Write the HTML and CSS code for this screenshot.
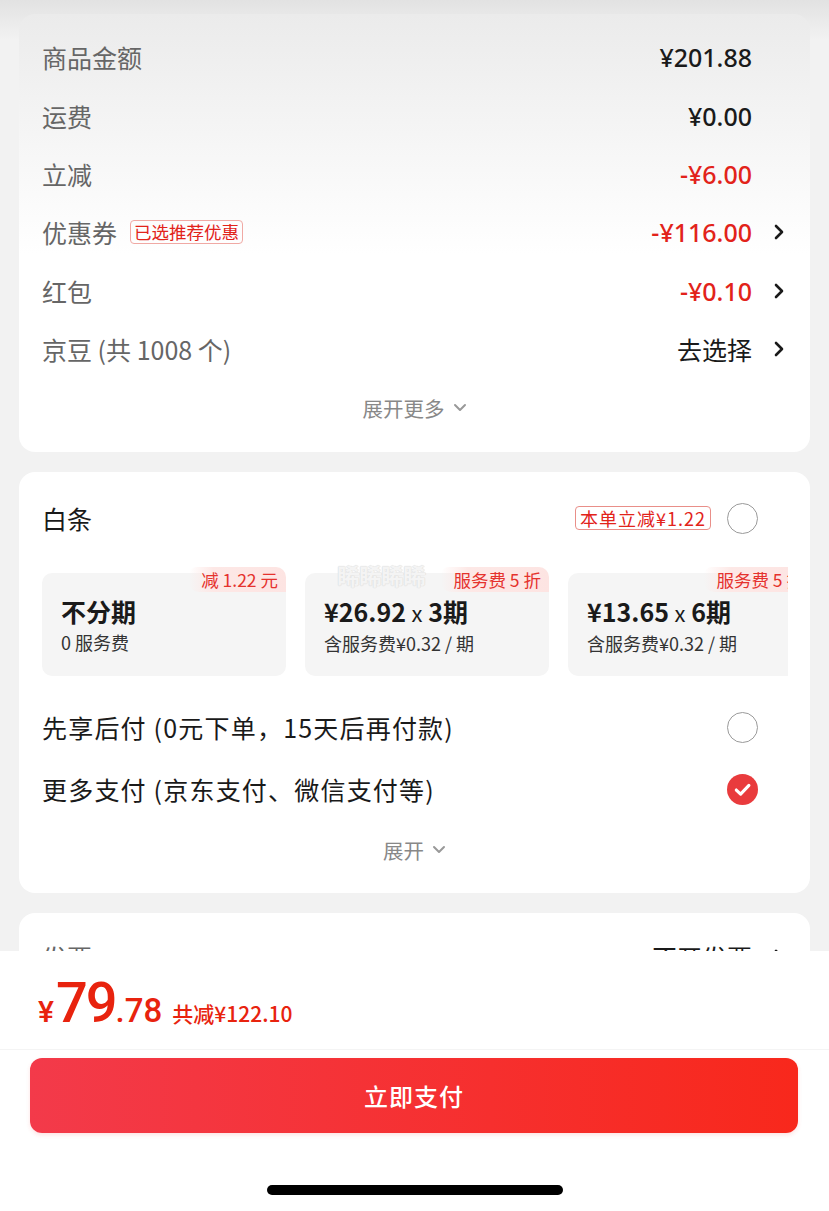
FILE: index.html
```html
<!DOCTYPE html>
<html lang="zh-CN">
<head>
<meta charset="utf-8">
<title>订单结算</title>
<link rel="stylesheet" href="styles.css">
</head>
<body>
<div class="screen">
  <div class="content">
    <section class="card card-summary">
      <div class="row">
        <span class="label">商品金额</span>
        <span class="value">¥201.88</span>
        <span class="arrow-slot"></span>
      </div>
      <div class="row">
        <span class="label">运费</span>
        <span class="value">¥0.00</span>
        <span class="arrow-slot"></span>
      </div>
      <div class="row">
        <span class="label">立减</span>
        <span class="value red">-¥6.00</span>
        <span class="arrow-slot"></span>
      </div>
      <div class="row">
        <span class="label">优惠券<span class="tag-outline">已选推荐优惠</span></span>
        <span class="value red">-¥116.00</span>
        <span class="arrow-slot"><svg class="chev" viewBox="0 0 10 16"><path d="M2 2l6 6-6 6"/></svg></span>
      </div>
      <div class="row">
        <span class="label">红包</span>
        <span class="value red">-¥0.10</span>
        <span class="arrow-slot"><svg class="chev" viewBox="0 0 10 16"><path d="M2 2l6 6-6 6"/></svg></span>
      </div>
      <div class="row">
        <span class="label">京豆 (共 1008 个)</span>
        <span class="value cjk">去选择</span>
        <span class="arrow-slot"><svg class="chev" viewBox="0 0 10 16"><path d="M2 2l6 6-6 6"/></svg></span>
      </div>
      <div class="expand">展开更多<svg class="down" viewBox="0 0 14 9"><path d="M2 2l5 5 5-5"/></svg></div>
    </section>

    <section class="card card-pay">
      <span class="watermark">睎睎睎睎</span>
      <div class="pay-row head">
        <span class="pay-title">白条</span>
        <span class="badge">本单立减¥1.22</span>
        <span class="radio"></span>
      </div>
      <div class="plans">
        <div class="plan">
          <span class="plan-tag">减 1.22 元</span>
          <div class="plan-main">不分期</div>
          <div class="plan-sub">0 服务费</div>
        </div>
        <div class="plan">
          <span class="plan-tag">服务费 5 折</span>
          <div class="plan-main">¥26.92 <span class="x">x</span> 3期</div>
          <div class="plan-sub">含服务费¥0.32 / 期</div>
        </div>
        <div class="plan">
          <span class="plan-tag">服务费 5 折</span>
          <div class="plan-main">¥13.65 <span class="x">x</span> 6期</div>
          <div class="plan-sub">含服务费¥0.32 / 期</div>
        </div>
      </div>
      <div class="pay-row opt">
        <span class="pay-title wide">先享后付 (0元下单，15天后再付款)</span>
        <span class="radio"></span>
      </div>
      <div class="pay-row opt">
        <span class="pay-title wide">更多支付 (京东支付、微信支付等)</span>
        <span class="radio checked"><svg viewBox="0 0 30 30"><path d="M9 15.5l4.2 4 8-8.5"/></svg></span>
      </div>
      <div class="expand small">展开<svg class="down" viewBox="0 0 14 9"><path d="M2 2l5 5 5-5"/></svg></div>
    </section>

    <section class="card card-invoice">
      <div class="row">
        <span class="label">发票</span>
        <span class="value cjk">不开发票</span>
        <span class="arrow-slot"><svg class="chev" viewBox="0 0 10 16"><path d="M2 2l6 6-6 6"/></svg></span>
      </div>
    </section>
  </div>

  <footer class="bar">
    <div class="total">
      <span class="yen">¥</span><span class="int">79</span><span class="dec">.78</span>
      <span class="saved">共减¥122.10</span>
    </div>
    <div class="btn-wrap">
      <button class="pay-btn">立即支付</button>
    </div>
    <div class="home-indicator"></div>
  </footer>
</div>
</body>
</html>
```

FILE: styles.css
```css
* { box-sizing: border-box; }
html, body { margin: 0; padding: 0; }
body {
  background: #f2f2f2;
  font-family: "Noto Sans CJK SC", "Noto Sans", sans-serif;
  color: #1a1a1a;
}
.screen {
  width: 829px;
  height: 1211px;
  display: flex;
  flex-direction: column;
  overflow: hidden;
  background: linear-gradient(180deg, #e2e2e2 0px, #f2f2f2 40px);
}
.content {
  height: 951px;
  flex: none;
  overflow: hidden;
  padding: 14px 19px 0;
  display: flex;
  flex-direction: column;
  gap: 20px;
}
.card {
  background: #fff;
  border-radius: 16px;
  flex: none;
}
.card-summary {
  padding: 14px 0 15px;
  background: linear-gradient(180deg, #ebebeb 0%, #f6f6f6 30%, #fff 55%);
}
.row {
  height: 58.4px;
  display: flex;
  align-items: center;
  padding: 0 26px 0 23px;
}
.label {
  flex: 1;
  font-size: 25px;
  color: #666;
  display: flex;
  align-items: center;
  white-space: nowrap;
}
.tag-outline {
  margin-left: 13px;
  font-size: 17.5px;
  line-height: 22px;
  padding: 0 3px;
  color: #e2231a;
  border: 1px solid #f0a9a4;
  border-radius: 4px;
}
.value {
  font-size: 25px;
  font-weight: 500;
  color: #1a1a1a;
  font-family: "Noto Sans", "Noto Sans CJK SC", sans-serif;
}
.value.cjk {
  font-family: "Noto Sans CJK SC", sans-serif;
  font-weight: 400;
}
.value.red { color: #e2231a; }
.arrow-slot {
  width: 32px;
  display: flex;
  justify-content: flex-end;
}
.chev {
  width: 10px;
  height: 16px;
  fill: none;
  stroke: #1a1a1a;
  stroke-width: 2.6;
  stroke-linecap: round;
  stroke-linejoin: round;
}
.expand {
  height: 59px;
  display: flex;
  align-items: center;
  justify-content: center;
  font-size: 20.5px;
  color: #888;
  gap: 8px;
}
.down {
  width: 14px;
  height: 9px;
  fill: none;
  stroke: #999;
  stroke-width: 2;
  stroke-linecap: round;
  stroke-linejoin: round;
}

/* payment card */
.card-pay {
  position: relative;
  padding-bottom: 14px;
}
.watermark {
  position: absolute;
  left: 318px;
  top: 86px;
  font-size: 23px;
  font-weight: 700;
  color: #f4f4f4;
  letter-spacing: -1px;
  text-shadow: 0 0 1px #d8d8d8, 0 0 1px #d8d8d8;
  z-index: 2;
}
.pay-row {
  display: flex;
  align-items: center;
  padding: 0 52px 0 23px;
}
.pay-row.head { height: 92px; }
.pay-row.opt { height: 62px; }
.pay-title {
  flex: 1;
  font-size: 25px;
  color: #1a1a1a;
  white-space: nowrap;
}
.pay-title.wide {
  letter-spacing: 1.2px;
}
.badge {
  font-size: 18px;
  line-height: 22px;
  padding: 0 4px;
  color: #e2231a;
  border: 1px solid #e98f89;
  border-radius: 4px;
  margin-right: 16px;
  letter-spacing: 1px;
}
.radio {
  width: 31px;
  height: 31px;
  border-radius: 50%;
  border: 1.5px solid #9a9a9a;
  flex: none;
  display: flex;
}
.radio.checked {
  border: none;
  background: #e93b3d;
}
.radio.checked svg {
  width: 31px;
  height: 31px;
  fill: none;
  stroke: #fff;
  stroke-width: 3;
  stroke-linecap: round;
  stroke-linejoin: round;
}
.plans {
  margin: 3px 22px 20px 23px;
  padding-top: 6px;
  display: flex;
  gap: 19px;
  overflow: hidden;
}
.plan {
  position: relative;
  flex: none;
  width: 244px;
  height: 103px;
  background: #f5f5f5;
  border-radius: 10px;
  padding: 20px 19px 0;
}
.plan-tag {
  position: absolute;
  right: 0;
  top: -6px;
  font-size: 17.5px;
  line-height: 25px;
  padding: 0 8px 0 12px;
  color: #e5322d;
  border-radius: 8px 10px 0 10px;
  background: linear-gradient(90deg, rgba(253,228,226,0) 0%, #fde8e6 25%, #fde4e2 100%);
}
.plan-main {
  font-size: 25px;
  font-weight: 700;
  line-height: 36px;
  color: #1a1a1a;
  white-space: nowrap;
}
.plan-main .x {
  font-weight: 400;
  font-size: 22px;
}
.plan-sub {
  font-size: 18px;
  line-height: 26px;
  color: #333;
  white-space: nowrap;
}
.card-invoice {
  padding-top: 14px;
  height: 120px;
}

/* bottom bar */
.bar {
  flex: 1;
  background: #fff;
  display: flex;
  flex-direction: column;
}
.total {
  height: 99px;
  display: flex;
  align-items: baseline;
  padding: 24px 0 0 38px;
  color: #e8230e;
  font-family: "Roboto", "Noto Sans CJK SC", sans-serif;
  border-bottom: 1px solid #f4f4f4;
  line-height: 1;
}
.yen { font-size: 30px; font-weight: 500; margin-right: 2px; }
.int { font-size: 56px; font-weight: 500; letter-spacing: -2px; }
.dec { font-size: 33px; font-weight: 500; }
.saved {
  font-size: 21px;
  margin-left: 10px;
  font-family: "Noto Sans CJK SC", sans-serif;
  font-weight: 500;
}
.btn-wrap {
  padding: 8px 31px 0 30px;
}
.pay-btn {
  width: 100%;
  height: 75px;
  border: none;
  border-radius: 12px;
  background: linear-gradient(90deg, #f33a4a 0%, #f62f2e 60%, #f8281c 100%);
  color: #fff;
  font-family: "Noto Sans CJK SC", sans-serif;
  font-size: 24px;
  font-weight: 500;
  letter-spacing: 1px;
  box-shadow: 0 2px 4px rgba(240, 60, 60, 0.15);
}
.home-indicator {
  width: 296px;
  height: 10px;
  border-radius: 5px;
  background: #000;
  margin: 52px auto 0;
}
```
